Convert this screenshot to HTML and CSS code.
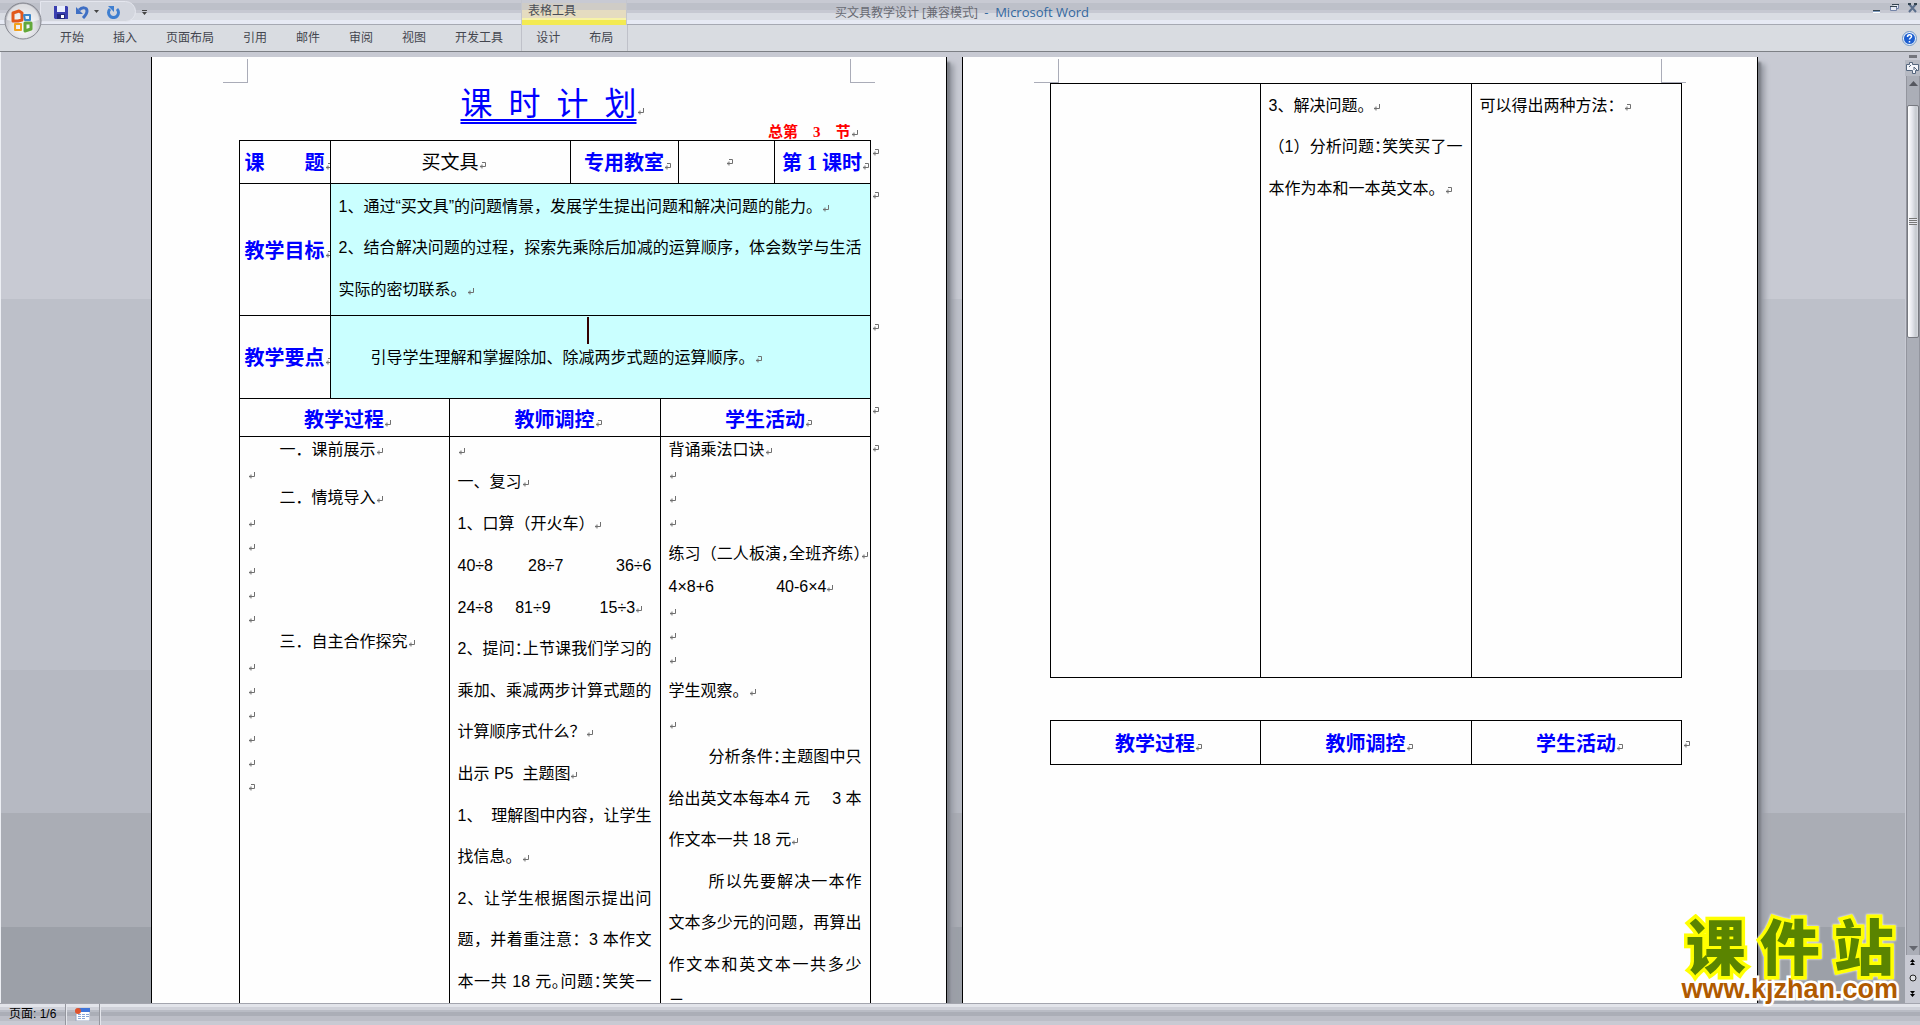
FILE: index.html
```html
<!DOCTYPE html>
<html lang="zh-CN">
<head>
<meta charset="utf-8">
<title>买文具教学设计 [兼容模式] - Microsoft Word</title>
<link rel="stylesheet" href="styles.css">
</head>
<body>
<svg class="defs" aria-hidden="true">
  <symbol id="pm" viewBox="0 0 8 8"><path d="M6.500 0v4.500H1M3 2.500v4M2 3.500v2" fill="none" stroke="#707070"/></symbol>
  <symbol id="pe" viewBox="0 0 8 8"><path d="M3 .5h3.500v4H1M3 2.500v4M2 3.500v2" fill="none" stroke="#707070"/></symbol>
</svg>

<div class="window">
  <header class="titlebar">
    <div class="title-left">
      <div class="qat">
        <button class="icon-btn" aria-label="保存"><svg width="14" height="14" viewBox="0 0 14 14"><path d="M0 1h13l1 1v12H1l-1-1z" fill="#3a3fb0"/><path d="M3 1h8v6H3z" fill="#e9eefc"/><path d="M3 9h8v5H3z" fill="#23287c"/><path d="M7 10h3v3H7z" fill="#fff"/></svg></button>
        <button class="icon-btn undo" aria-label="撤消"><svg width="14" height="14" viewBox="0 0 14 14"><path d="M3 5c3-3 8-3 8 1 0 3-2 5-4 7" fill="none" stroke="#3f6fc4" stroke-width="3"/><path d="M0 2v7h7z" fill="#3f6fc4"/></svg></button>
        <button class="icon-btn small" aria-label="撤消选项"><svg width="5" height="3" viewBox="0 0 5 3"><path d="M0 0h5L2.500 3z" fill="#444"/></svg></button>
        <button class="icon-btn" aria-label="重复"><svg width="14" height="14" viewBox="0 0 14 14"><path d="M3 4a5 5 0 1 0 7 0" fill="none" stroke="#3f7fd0" stroke-width="3"/><path d="M1 1h6v6z" fill="#3f7fd0"/></svg></button>
      </div>
      <button class="icon-btn more" aria-label="自定义快速访问工具栏"><svg width="5" height="5" viewBox="0 0 5 5"><path d="M0 0h5v1H0zM0 2h5L2.500 5z" fill="#444"/></svg></button>
      <div class="context-title">表格工具</div>
    </div>
    <h1 class="doc-name">买文具教学设计 [兼容模式]&nbsp; <span>-&nbsp; Microsoft Word</span></h1>
    <div class="win-controls">
      <button class="icon-btn" aria-label="最小化"><svg width="10" height="10" viewBox="0 0 10 10"><path d="M1 7h7v1H1z" fill="#344450"/><path d="M1 8h7v1H1z" fill="#7d9abf"/><path d="M1 9h7v1H1z" fill="#fff"/></svg></button>
      <button class="icon-btn" aria-label="还原"><svg width="10" height="10" viewBox="0 0 10 10"><path d="M2.500 1.500h6v4h-2M.5 3.500h6v4h-6z" fill="#e6eaf4" stroke="#7484a8"/><path d="M2 1h7v1H2zM0 3h7v1H0z" fill="#344450"/></svg></button>
      <button class="icon-btn" aria-label="关闭"><svg width="10" height="10" viewBox="0 0 10 10"><path d="M1 1l7 8M8 1L1 9" stroke="#5b6f8c" stroke-width="2"/><path d="M0 1h3M6 1h3" stroke="#344450" stroke-width="2"/></svg></button>
    </div>
    <button class="orb" aria-label="Office 按钮">
      <svg width="38" height="38" viewBox="0 0 38 38">
        <defs><radialGradient id="orbg" cx=".5" cy=".7" r=".6"><stop offset="0" stop-color="#fff"/><stop offset=".6" stop-color="#dcdde2"/><stop offset="1" stop-color="#b4b5bd"/></radialGradient></defs>
        <circle cx="19" cy="19" r="18" fill="url(#orbg)" stroke="#85878f"/>
        <path d="M3 18a16 16 0 0 1 32 0q-16 5-32 0z" fill="#fff" opacity=".55"/>
        <g fill="none" stroke-linejoin="round">
          <path d="M15 9l-6 2v8h5l4-1v-7z" stroke="#e2581b" stroke-width="3"/>
          <path d="M20 13h6v5h-5z" stroke="#3c86c8" stroke-width="2"/>
          <path d="M17 22h-6v6h6z" stroke="#f2a21c" stroke-width="2"/>
          <path d="M21 21h6v6l-6 2z" stroke="#63a83a" stroke-width="3"/>
        </g>
      </svg>
    </button>
  </header>

  <nav class="tabs">
    <button>开始</button><button>插入</button><button>页面布局</button><button>引用</button><button>邮件</button><button>审阅</button><button>视图</button><button>开发工具</button>
    <div class="context-tabs"><button>设计</button><button>布局</button></div>
    <button class="help" aria-label="帮助"><svg width="15" height="15" viewBox="0 0 15 15"><circle cx="7.500" cy="7.500" r="7" fill="#e8f0fa" stroke="#6f95c4"/><circle cx="7.500" cy="7.500" r="5.500" fill="#1e5fd0"/><path d="M5.500 6c0-3 4-3 4-.5 0 1.500-2 1.500-2 3M7.500 10v1.500" fill="none" stroke="#fff" stroke-width="1.500"/></svg></button>
  </nav>

  <main class="workspace">
    <div class="canvas">
      <article class="page">
        <div class="corners"><span class="corner tl"></span><span class="corner tr"></span></div>
        <h2 class="plan-title"><span>课&ensp;时&ensp;计&ensp;划</span><svg class="pm"><use href="#pm"/></svg></h2>
        <p class="plan-no">总第　3　节<svg class="pm"><use href="#pm"/></svg></p>
        <table class="plan">
          <colgroup><col class="w91"><col class="w119"><col class="w121"><col class="w90"><col class="w18"><col class="w96"><col class="w96"><col class="w12"></colgroup>
          <tr class="r-topic">
            <th>课　　题<svg class="pm"><use href="#pe"/></svg></th>
            <td colspan="2" class="topic">买文具<svg class="pm"><use href="#pe"/></svg></td>
            <th colspan="2">专用教室<svg class="pm"><use href="#pe"/></svg></th>
            <td class="topic"><svg class="pm"><use href="#pe"/></svg></td>
            <th>第 1 课时<svg class="pm"><use href="#pe"/></svg></th>
            <td class="end"><svg class="pm"><use href="#pe"/></svg></td>
          </tr>
          <tr class="r-goal">
            <th>教学目标<svg class="pm"><use href="#pe"/></svg></th>
            <td colspan="6" class="tint goal">
              <p class="a">1、通过“买文具”的问题情景，发展学生提出问题和解决问题的能力。<svg class="pm"><use href="#pm"/></svg></p>
              <p class="b full">2、结合解决问题的过程，探索先乘除后加减的运算顺序，体会数学与生活</p>
              <p class="a">实际的密切联系。<svg class="pm"><use href="#pm"/></svg></p>
            </td>
            <td class="end"><svg class="pm"><use href="#pe"/></svg></td>
          </tr>
          <tr class="r-key">
            <th>教学要点<svg class="pm"><use href="#pe"/></svg></th>
            <td colspan="6" class="tint key"><span class="caret"></span><p class="b in32">引导学生理解和掌握除加、除减两步式题的运算顺序。<svg class="pm"><use href="#pe"/></svg></p></td>
            <td class="end"><svg class="pm"><use href="#pe"/></svg></td>
          </tr>
          <tr class="r-head">
            <th colspan="2">教学过程<svg class="pm"><use href="#pm"/></svg></th>
            <th colspan="2">教师调控<svg class="pm"><use href="#pe"/></svg></th>
            <th colspan="3">学生活动<svg class="pm"><use href="#pe"/></svg></th>
            <td class="end"><svg class="pm"><use href="#pe"/></svg></td>
          </tr>
          <tr class="r-body">
            <td colspan="2">
              <p class="in32">一．课前展示<svg class="pm"><use href="#pm"/></svg></p>
              <p><svg class="pm"><use href="#pm"/></svg></p>
              <p class="in32">二．情境导入<svg class="pm"><use href="#pm"/></svg></p>
              <p><svg class="pm"><use href="#pm"/></svg></p>
              <p><svg class="pm"><use href="#pm"/></svg></p>
              <p><svg class="pm"><use href="#pm"/></svg></p>
              <p><svg class="pm"><use href="#pm"/></svg></p>
              <p><svg class="pm"><use href="#pm"/></svg></p>
              <p class="in32">三．自主合作探究<svg class="pm"><use href="#pm"/></svg></p>
              <p><svg class="pm"><use href="#pm"/></svg></p>
              <p><svg class="pm"><use href="#pm"/></svg></p>
              <p><svg class="pm"><use href="#pm"/></svg></p>
              <p><svg class="pm"><use href="#pm"/></svg></p>
              <p><svg class="pm"><use href="#pm"/></svg></p>
              <p><svg class="pm"><use href="#pe"/></svg></p>
            </td>
            <td colspan="2">
              <p><svg class="pm"><use href="#pm"/></svg></p>
              <p class="b">一、复习<svg class="pm"><use href="#pm"/></svg></p>
              <p class="a">1、口算（开火车）<svg class="pm"><use href="#pm"/></svg></p>
              <p class="a full">40÷8&nbsp;&nbsp;&nbsp;&nbsp;&nbsp;&nbsp;28÷7&nbsp;&nbsp;&nbsp;&nbsp;&nbsp;&nbsp;&nbsp;&nbsp;&nbsp;36÷6</p>
              <p class="a">24÷8&nbsp;&nbsp;&nbsp;&nbsp;&nbsp;81÷9&nbsp;&nbsp;&nbsp;&nbsp;&nbsp;&nbsp;&nbsp;&nbsp;&nbsp;&nbsp;&nbsp;15÷3<svg class="pm"><use href="#pm"/></svg></p>
              <p class="b full">2、提问<span class="half">：</span>上节课我们学习的</p>
              <p class="a full">乘加、乘减两步计算式题的</p>
              <p class="b">计算顺序式什么？<svg class="pm"><use href="#pm"/></svg></p>
              <p class="a">出示 P5&nbsp; 主题图<svg class="pm"><use href="#pm"/></svg></p>
              <p class="a full">1、&nbsp; 理解图中内容，让学生</p>
              <p class="b">找信息。<svg class="pm"><use href="#pm"/></svg></p>
              <p class="a full">2、让学生根据图示提出问</p>
              <p class="b full">题，并着重注意：3 本作文</p>
              <p class="a full">本一共 18 元<span class="half">。</span>问题<span class="half">：</span>笑笑一</p>
            </td>
            <td colspan="3">
              <p>背诵乘法口诀<svg class="pm"><use href="#pm"/></svg></p>
              <p><svg class="pm"><use href="#pm"/></svg></p>
              <p><svg class="pm"><use href="#pm"/></svg></p>
              <p><svg class="pm"><use href="#pm"/></svg></p>
              <p class="b full">练习（二人板演<span class="half">，</span>全班齐练<span class="half">）</span><svg class="pm"><use href="#pm"/></svg></p>
              <p>4×8+6&nbsp;&nbsp;&nbsp;&nbsp;&nbsp;&nbsp;&nbsp;&nbsp;&nbsp;&nbsp;&nbsp;&nbsp;&nbsp;&nbsp;40-6×4<svg class="pm"><use href="#pm"/></svg></p>
              <p><svg class="pm"><use href="#pm"/></svg></p>
              <p><svg class="pm"><use href="#pm"/></svg></p>
              <p><svg class="pm"><use href="#pm"/></svg></p>
              <p class="b">学生观察。<svg class="pm"><use href="#pm"/></svg></p>
              <p><svg class="pm"><use href="#pm"/></svg></p>
              <p class="a full in40">分析条件<span class="half">：</span>主题图中只</p>
              <p class="a full">给出英文本每本4 元&nbsp;&nbsp;&nbsp;&nbsp;&nbsp;3 本</p>
              <p class="b">作文本一共 18 元<svg class="pm"><use href="#pm"/></svg></p>
              <p class="a full in40">所以先要解决一本作</p>
              <p class="b full">文本多少元的问题，再算出</p>
              <p class="a full">作文本和英文本一共多少</p>
              <p class="b">元</p>
            </td>
            <td class="end"><svg class="pm"><use href="#pe"/></svg></td>
          </tr>
        </table>
      </article>

      <article class="page">
        <div class="corners"><span class="corner tl"></span><span class="corner tr"></span></div>
        <table class="plan">
          <colgroup><col class="w210"><col class="w211"><col class="w210"></colgroup>
          <tr class="r-cont">
            <td></td>
            <td>
              <p class="a">3、解决问题。<svg class="pm"><use href="#pm"/></svg></p>
              <p class="b full">（1）分析问题<span class="half">：</span>笑笑买了一</p>
              <p class="a">本作为本和一本英文本。<svg class="pm"><use href="#pe"/></svg></p>
            </td>
            <td><p class="a">可以得出两种方法：<svg class="pm"><use href="#pe"/></svg></p></td>
          </tr>
        </table>
        <table class="plan second">
          <colgroup><col class="w210"><col class="w211"><col class="w210"><col class="w12"></colgroup>
          <tr class="r-next">
            <th>教学过程<svg class="pm"><use href="#pe"/></svg></th>
            <th>教师调控<svg class="pm"><use href="#pe"/></svg></th>
            <th>学生活动<svg class="pm"><use href="#pe"/></svg></th>
            <td class="end mid"><svg class="pm"><use href="#pe"/></svg></td>
          </tr>
        </table>
      </article>
    </div>

    <aside class="scroll">
      <span class="split"></span>
      <button class="ruler" aria-label="标尺"><svg width="13" height="13" viewBox="0 0 13 13"><path d="M.5 2.500h3v-2h3v2h6v6h-3v3h-3v-3h-6z" fill="#f4f5fa" stroke="#56677e"/><path d="M3 5l2-2M8 8V5l3 3" stroke="#56677e" fill="none"/></svg></button>
      <div class="track">
        <button class="arrow" aria-label="向上滚动"><svg width="9" height="5" viewBox="0 0 9 5"><path d="M0 5h9L4.500 0z" fill="#55575f"/></svg></button>
        <div class="thumb"><span class="grip"></span></div>
        <button class="arrow down" aria-label="向下滚动"><svg width="9" height="5" viewBox="0 0 9 5"><path d="M0 0h9L4.500 5z" fill="#65676f"/></svg></button>
      </div>
      <div class="browse">
        <button aria-label="前一页"><svg width="7" height="7" viewBox="0 0 7 7"><path d="M1 3h5L3.500 0zM1 6h5L3.500 3z"/></svg></button>
        <button aria-label="选择浏览对象"><svg width="8" height="8" viewBox="0 0 8 8"><circle cx="4" cy="4" r="3" fill="#dfe1e4" stroke="#222"/></svg></button>
        <button aria-label="下一页"><svg width="7" height="7" viewBox="0 0 7 7"><path d="M1 1h5L3.500 4zM1 4h5L3.500 7z"/></svg></button>
      </div>
    </aside>

    <div class="watermark"><strong><b>课</b><b>件</b><b>站</b></strong><span>www.kjzhan.com</span></div>
  </main>

  <footer class="status">
    <span class="cell">页面: 1/6</span>
    <span class="cell macro"><svg width="15" height="13" viewBox="0 0 15 13"><path d="M1 1h14v12H1z" fill="#fff" stroke="#9aa6c0"/><path d="M3 0h12v4H3z" fill="#3f74d8"/><path d="M3 6h3v1H3zM7 6h3v1H7zM11 6h3v1h-3zM3 8h3v1H3zM7 8h3v1H7zM11 8h3v1h-3zM3 10h3v1H3zM7 10h3v1H7z" fill="#88a6d8"/><circle cx="3" cy="3" r="3" fill="#e0532c"/></svg></span>
  </footer>
</div>
</body>
</html>
```
FILE: styles.css
```css
* { box-sizing: border-box; }
body {
  margin: 0;
  font-family: "Liberation Sans", "Noto Sans CJK SC", sans-serif;
  font-size: 16px;
  color: #000;
}
p, h1, h2 { margin: 0; font-weight: normal; }
button { border: 0; padding: 0; background: none; font: inherit; color: inherit; }
svg { display: block; }
.defs { position: absolute; width: 0; height: 0; }

.window { display: flex; flex-direction: column; height: 100vh; overflow: hidden; background: #c8cad3; }

/* title bar */
.titlebar {
  position: relative;
  flex: none;
  display: grid;
  grid-template-columns: 1fr auto 1fr;
  height: 25px;
  border-bottom: 1px solid #a6a9b2;
  background: linear-gradient(#c8cad3 0 3px, #bdc0c9 3px 10px, #c6c8d2 10px 13px, #d9dce3 13px 20px, #e7eaf4 20px);
}
.title-left { display: flex; padding-left: 40px; }
.qat {
  display: flex;
  align-items: center;
  gap: 8px;
  width: 96px;
  height: 21px;
  margin-top: 1px;
  padding-left: 13px;
  border: 1px solid #e4e6ee;
  border-radius: 0 11px 11px 0;
  background: #d3d6de;
}
.icon-btn.small { margin-left: -4px; }
.more { width: 18px; padding-left: 6px; }
.context-title {
  width: 106px;
  margin-left: 367px;
  padding-left: 6px;
  border: 1px solid #c4c6cd;
  border-width: 0 1px;
  background: linear-gradient(#c8cad3 0 3px, #cfccc6 3px 10px, #e5dcc0 10px 18px, #f7f3a8 18px 20px, #f3ea52 20px);
  color: #4a4c55;
  font-size: 12px;
  line-height: 22px;
}
.doc-name { font: 12px/25px "Open Sans", "Noto Sans CJK SC", sans-serif; color: #686a73; padding-left: 4px; }
.doc-name span { color: #33689f; font-size: 13px; }
.win-controls { display: flex; justify-content: flex-end; gap: 8px; padding: 3px 2px 0 0; }
.win-controls .icon-btn { height: 10px; }
.orb { position: absolute; left: 4px; top: 2px; z-index: 1; }

/* ribbon tabs */
.tabs {
  flex: none;
  display: flex;
  align-items: center;
  gap: 1px;
  height: 27px;
  padding-left: 46px;
  border-bottom: 1px solid #7d8085;
  background: #d9dce1;
  color: #44464f;
  font-size: 12px;
}
.tabs button { padding: 0 14px; line-height: 26px; }
.context-tabs {
  display: flex;
  align-items: center;
  gap: 1px;
  align-self: stretch;
  margin-left: 3px;
  border: 1px solid #bfc1c9;
  border-width: 0 1px;
}
.tabs .help { margin-left: auto; padding: 0 3px 0 0; }

/* document area */
.workspace { position: relative; flex: 1; min-height: 0; display: flex; }
.canvas {
  flex: 1;
  display: flex;
  justify-content: center;
  gap: 15px;
  padding: 5px 0 0 2px;
  border-left: 1px solid #eceef3;
  overflow: hidden;
  background: linear-gradient(#c8cad3 0 26%, #bdc0c9 26% 65%, #b6b9c2 65% 80%, #aaadb5 80% 92%, #9ca0a8 92%);
}
.page {
  flex: none;
  width: 796px;
  border: 1px solid #000;
  border-width: 0 1px;
  background: #fefefe;
  box-shadow: 3px 5px 2px #7d8088, 7px 7px 5px #9a9da6;
}
.corners { display: flex; justify-content: space-between; padding: 2px 71px 0; height: 26px; }
.corner { width: 25px; height: 24px; border-bottom: 1px solid #aaacb8; }
.tl { border-right: 1px solid #aaacb8; }
.tr { border-left: 1px solid #aaacb8; }

.plan-title {
  height: 41px;
  color: #00f;
  font-size: 32px;
  line-height: 42px;
  text-align: center;
}
.plan-title span {
  text-decoration: underline double 2px;
  text-underline-offset: 4px;
  text-decoration-skip-ink: none;
}
.plan-no {
  height: 16px;
  padding-right: 95px;
  color: #f00;
  font: bold 15px/16px "Liberation Serif", "Noto Sans CJK SC", serif;
  text-align: right;
}

/* paragraph marks take no room in the line */
.pm { display: inline-block; width: 8px; height: 8px; margin-right: -8px; vertical-align: -1px; }

.plan {
  width: 0;
  margin-left: 87px;
  border-collapse: collapse;
  table-layout: fixed;
}
.w12 { width: 12px; } .w18 { width: 18px; } .w90 { width: 90px; } .w91 { width: 91px; }
.w96 { width: 96px; } .w119 { width: 119px; } .w121 { width: 121px; } .w210 { width: 210px; } .w211 { width: 211px; }
.plan th, .plan td {
  padding: 0 8px;
  border: 1px solid #000;
  overflow: hidden;
  vertical-align: top;
  white-space: nowrap;
}
.plan th {
  padding: 2px 0 0;
  color: #00f;
  font: bold 20px/24px "Liberation Serif", "Noto Sans CJK SC", serif;
  vertical-align: middle;
  text-align: center;
}
.plan .topic { padding-bottom: 4px; font-size: 19px; vertical-align: middle; text-align: center; }
.plan .end { padding: 0 0 0 1px; border-width: 0 0 0 1px; line-height: 20px; }
.plan .mid { vertical-align: middle; }
.plan .tint { background: #caffff; }
.plan .goal { padding-top: 1px; }
.plan .key { position: relative; vertical-align: middle; }
.caret { position: absolute; left: 256px; top: 1px; width: 2px; height: 27px; background: #300; }
.r-topic { height: 43px; }
.r-goal { height: 132px; }
.r-key { height: 83px; }
.r-head { height: 38px; }
.r-head th { padding-top: 4px; }
.r-body { height: 640px; }
.r-cont { height: 594px; }
.r-next { height: 44px; }
.second { margin-top: 42px; }

.plan p { height: 24px; line-height: 26px; }
.plan p.a { height: 42px; line-height: 43px; }
.plan p.b { height: 41px; line-height: 42px; }
.plan .full { text-align: justify; text-align-last: justify; }
.plan .in32 { padding-left: 32px; }
.plan .in40 { padding-left: 40px; }
.half { font-feature-settings: "halt"; }

/* vertical scroll bar */
.scroll { flex: none; width: 15px; display: flex; flex-direction: column; align-items: center; background: #c8cad3; }
.split { width: 8px; height: 3px; margin: 3px 0 2px; background: #73757c; }
.ruler { width: 15px; height: 16px; padding: 1px; background: #b7bac3; }
.track { flex: 1; width: 14px; display: flex; flex-direction: column; background: #abaeb7; border: 1px solid #93959e; border-width: 0 1px; }
.arrow { height: 29px; padding: 5px 0 0 2px; display: flex; }
.thumb {
  height: 233px;
  display: flex;
  align-items: center;
  justify-content: center;
  border: 1px solid #777980;
  border-radius: 2px;
  background: linear-gradient(90deg, #fff, #e6e7ee 40%, #c5c9cf 80%, #d8dae0);
}
.grip { width: 8px; height: 7px; background: repeating-linear-gradient(#777 0 1px, #e6e7ee 1px 2px); }
.tabs .down { height: 14px; }
.down { margin-top: auto; height: 14px; }
.browse { display: flex; flex-direction: column; align-items: center; gap: 8px; padding: 4px 0 6px; }

/* site watermark */
.watermark {
  position: absolute;
  right: 22px;
  bottom: 0;
  display: flex;
  flex-direction: column;
  align-items: center;
  font-weight: bold;
}
.watermark strong {
  display: flex;
  gap: 14px;
  color: #5a8400;
  font-size: 60px;
  line-height: 50px;
  -webkit-text-stroke: 7px #ff0;
  paint-order: stroke fill;
  filter: drop-shadow(0 0 1px #fff);
}
.watermark span {
  color: #b05a00;
  font-size: 27px;
  line-height: 28px;
  -webkit-text-stroke: 5px #fff;
  paint-order: stroke fill;
}

/* status bar */
.status {
  flex: none;
  display: flex;
  height: 22px;
  border-top: 1px solid #a3a5ae;
  background: linear-gradient(#e2e4ea 0 3px, #cfd1d9 3px 6px, #b9bcc5 6px 8px, #abaeb7 8px 12px, #bcbec7 12px 17px, #c8cad3 17px);
  font-size: 12px;
  line-height: 20px;
}
.cell { padding: 0 9px; border-right: 1px solid #94969e; box-shadow: 1px 0 #e4e6ec; }
.macro { display: flex; align-items: center; }
```
